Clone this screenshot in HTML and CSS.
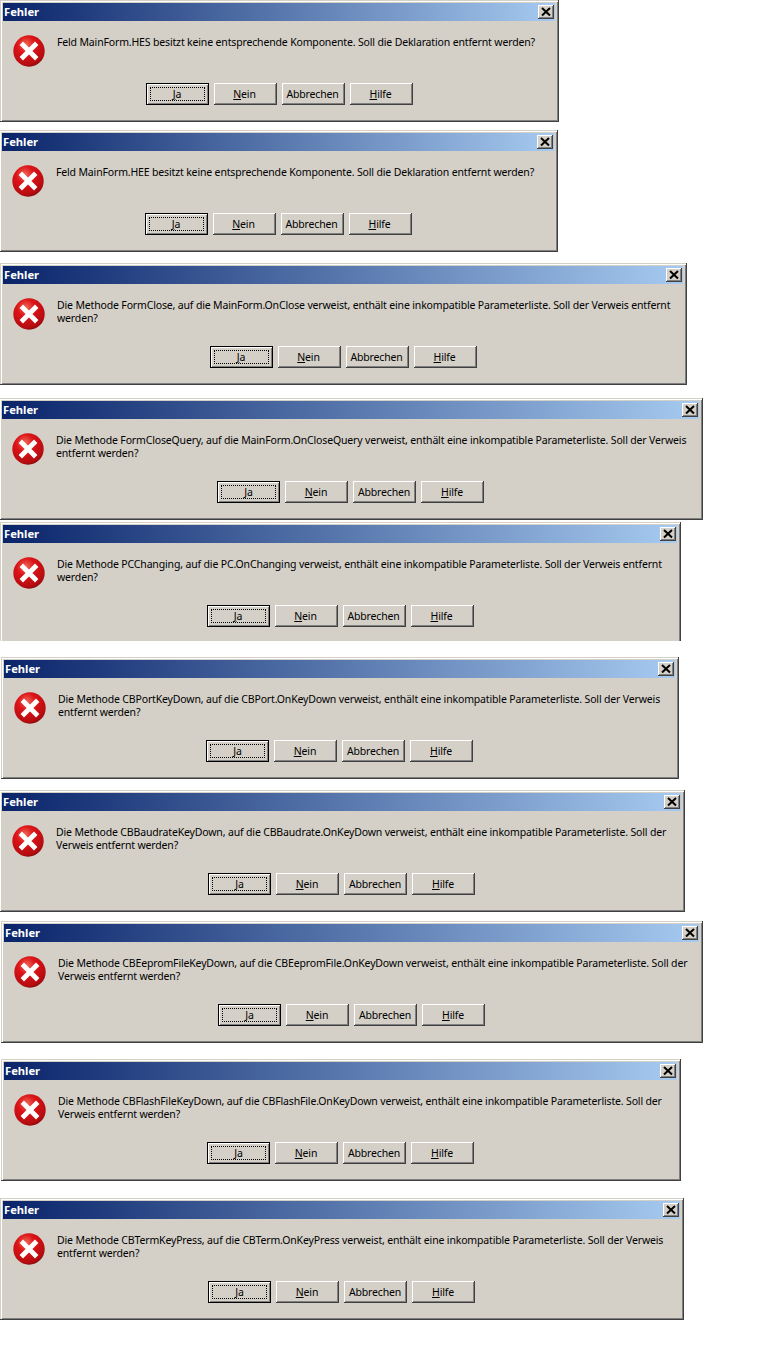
FILE: index.html
```html
<!DOCTYPE html>
<html lang="de">
<head>
<meta charset="utf-8">
<title>Fehler</title>
<link rel="stylesheet" href="styles.css">
</head>
<body>
<svg class="defs" width="0" height="0" aria-hidden="true">
<defs>
<radialGradient id="red" cx="0.4" cy="0.3" r="0.8">
<stop offset="0" stop-color="#f06a5a"/>
<stop offset="0.35" stop-color="#dc1418"/>
<stop offset="0.8" stop-color="#b40c10"/>
<stop offset="1" stop-color="#5e0404"/>
</radialGradient>
<symbol id="err" viewBox="0 0 32 32">
<circle cx="16" cy="16" r="15.7" fill="url(#red)"/>
<path d="M10 10 L22 22 M22 10 L10 22" stroke="#fff" stroke-width="4.8" stroke-linecap="square" fill="none"/>
</symbol>
<symbol id="x" viewBox="0 0 16 14">
<path d="M4 3 L12 10.5 M12 3 L4 10.5" stroke="#000" stroke-width="2" fill="none"/>
</symbol>
</defs>
</svg>

<section class="dialog d1">
<div class="titlebar"><span class="title">Fehler</span><span class="close"><svg class="x"><use href="#x"/></svg></span></div>
<div class="message"><svg class="icon"><use href="#err"/></svg><p class="text">Feld MainForm.HES besitzt keine entsprechende Komponente. Soll die Deklaration entfernt werden?</p></div>
<div class="buttons"><button class="btn default"><span class="focus"><u>J</u>a</span></button><button class="btn"><u>N</u>ein</button><button class="btn">Abbrechen</button><button class="btn"><u>H</u>ilfe</button></div>
</section>

<section class="dialog d2">
<div class="titlebar"><span class="title">Fehler</span><span class="close"><svg class="x"><use href="#x"/></svg></span></div>
<div class="message"><svg class="icon"><use href="#err"/></svg><p class="text">Feld MainForm.HEE besitzt keine entsprechende Komponente. Soll die Deklaration entfernt werden?</p></div>
<div class="buttons"><button class="btn default"><span class="focus"><u>J</u>a</span></button><button class="btn"><u>N</u>ein</button><button class="btn">Abbrechen</button><button class="btn"><u>H</u>ilfe</button></div>
</section>

<section class="dialog d3">
<div class="titlebar"><span class="title">Fehler</span><span class="close"><svg class="x"><use href="#x"/></svg></span></div>
<div class="message"><svg class="icon"><use href="#err"/></svg><p class="text">Die Methode FormClose, auf die MainForm.OnClose verweist, enthält eine inkompatible Parameterliste. Soll der Verweis entfernt<br>werden?</p></div>
<div class="buttons"><button class="btn default"><span class="focus"><u>J</u>a</span></button><button class="btn"><u>N</u>ein</button><button class="btn">Abbrechen</button><button class="btn"><u>H</u>ilfe</button></div>
</section>

<section class="dialog d4">
<div class="titlebar"><span class="title">Fehler</span><span class="close"><svg class="x"><use href="#x"/></svg></span></div>
<div class="message"><svg class="icon"><use href="#err"/></svg><p class="text">Die Methode FormCloseQuery, auf die MainForm.OnCloseQuery verweist, enthält eine inkompatible Parameterliste. Soll der Verweis<br>entfernt werden?</p></div>
<div class="buttons"><button class="btn default"><span class="focus"><u>J</u>a</span></button><button class="btn"><u>N</u>ein</button><button class="btn">Abbrechen</button><button class="btn"><u>H</u>ilfe</button></div>
</section>

<section class="dialog d5">
<div class="titlebar"><span class="title">Fehler</span><span class="close"><svg class="x"><use href="#x"/></svg></span></div>
<div class="message"><svg class="icon"><use href="#err"/></svg><p class="text">Die Methode PCChanging, auf die PC.OnChanging verweist, enthält eine inkompatible Parameterliste. Soll der Verweis entfernt<br>werden?</p></div>
<div class="buttons"><button class="btn default"><span class="focus"><u>J</u>a</span></button><button class="btn"><u>N</u>ein</button><button class="btn">Abbrechen</button><button class="btn"><u>H</u>ilfe</button></div>
</section>

<section class="dialog d6">
<div class="titlebar"><span class="title">Fehler</span><span class="close"><svg class="x"><use href="#x"/></svg></span></div>
<div class="message"><svg class="icon"><use href="#err"/></svg><p class="text">Die Methode CBPortKeyDown, auf die CBPort.OnKeyDown verweist, enthält eine inkompatible Parameterliste. Soll der Verweis<br>entfernt werden?</p></div>
<div class="buttons"><button class="btn default"><span class="focus"><u>J</u>a</span></button><button class="btn"><u>N</u>ein</button><button class="btn">Abbrechen</button><button class="btn"><u>H</u>ilfe</button></div>
</section>

<section class="dialog d7">
<div class="titlebar"><span class="title">Fehler</span><span class="close"><svg class="x"><use href="#x"/></svg></span></div>
<div class="message"><svg class="icon"><use href="#err"/></svg><p class="text">Die Methode CBBaudrateKeyDown, auf die CBBaudrate.OnKeyDown verweist, enthält eine inkompatible Parameterliste. Soll der<br>Verweis entfernt werden?</p></div>
<div class="buttons"><button class="btn default"><span class="focus"><u>J</u>a</span></button><button class="btn"><u>N</u>ein</button><button class="btn">Abbrechen</button><button class="btn"><u>H</u>ilfe</button></div>
</section>

<section class="dialog d8">
<div class="titlebar"><span class="title">Fehler</span><span class="close"><svg class="x"><use href="#x"/></svg></span></div>
<div class="message"><svg class="icon"><use href="#err"/></svg><p class="text">Die Methode CBEepromFileKeyDown, auf die CBEepromFile.OnKeyDown verweist, enthält eine inkompatible Parameterliste. Soll der<br>Verweis entfernt werden?</p></div>
<div class="buttons"><button class="btn default"><span class="focus"><u>J</u>a</span></button><button class="btn"><u>N</u>ein</button><button class="btn">Abbrechen</button><button class="btn"><u>H</u>ilfe</button></div>
</section>

<section class="dialog d9">
<div class="titlebar"><span class="title">Fehler</span><span class="close"><svg class="x"><use href="#x"/></svg></span></div>
<div class="message"><svg class="icon"><use href="#err"/></svg><p class="text">Die Methode CBFlashFileKeyDown, auf die CBFlashFile.OnKeyDown verweist, enthält eine inkompatible Parameterliste. Soll der<br>Verweis entfernt werden?</p></div>
<div class="buttons"><button class="btn default"><span class="focus"><u>J</u>a</span></button><button class="btn"><u>N</u>ein</button><button class="btn">Abbrechen</button><button class="btn"><u>H</u>ilfe</button></div>
</section>

<section class="dialog d10">
<div class="titlebar"><span class="title">Fehler</span><span class="close"><svg class="x"><use href="#x"/></svg></span></div>
<div class="message"><svg class="icon"><use href="#err"/></svg><p class="text">Die Methode CBTermKeyPress, auf die CBTerm.OnKeyPress verweist, enthält eine inkompatible Parameterliste. Soll der Verweis<br>entfernt werden?</p></div>
<div class="buttons"><button class="btn default"><span class="focus"><u>J</u>a</span></button><button class="btn"><u>N</u>ein</button><button class="btn">Abbrechen</button><button class="btn"><u>H</u>ilfe</button></div>
</section>
</body>
</html>
```
FILE: styles.css
```css
html, body { margin: 0; padding: 0; background: #fff; }
body { width: 767px; height: 1364px; overflow: hidden; font-family: "Noto Sans", "Liberation Sans", sans-serif; font-size: 10.5px; letter-spacing: -0.155px; color: #000; }
.defs { position: absolute; }

.dialog {
  box-sizing: border-box;
  height: 122px;
  padding: 3px;
  background: #d4d0c8;
  border-right: 1px solid #404040;
  border-bottom: 1px solid #404040;
  box-shadow: inset 1px 1px 0 #d4d0c8, inset 2px 2px 0 #fff, inset -1px -1px 0 #808080;
  display: flex;
  flex-direction: column;
}
.d1 { width: 559px; margin: 0 0 0 0; }
.d2 { width: 559px; margin: 8px 0 0 -1px; }
.d3 { width: 687px; margin: 11px 0 0 0; }
.d4 { width: 704px; margin: 13px 0 0 -1px; }
.d5 { width: 681px; margin: 2px 0 0 0; height: 119px; border-bottom: 0; box-shadow: inset 1px 1px 0 #d4d0c8, inset 2px 2px 0 #fff, inset -1px 0 0 #808080; }
.d6 { width: 678px; margin: 16px 0 0 1px; }
.d7 { width: 686px; margin: 11px 0 0 -1px; }
.d8 { width: 702px; margin: 9px 0 0 1px; }
.d9 { width: 680px; margin: 16px 0 0 1px; }
.d10 { width: 684px; margin: 17px 0 0 0; }

.titlebar {
  height: 18px;
  flex: none;
  display: flex;
  align-items: center;
  justify-content: space-between;
  padding: 0 1px 0 1px;
  background: linear-gradient(to right, #0a246a, #a6caf0);
}
.title { font-weight: 700; font-size: 11.2px; line-height: 14px; letter-spacing: 0; color: #fff; }
.close {
  box-sizing: border-box;
  width: 16px;
  height: 14px;
  display: flex;
  background: #d4d0c8;
  border-right: 1px solid #404040;
  border-bottom: 1px solid #404040;
  box-shadow: inset 1px 1px 0 #fff, inset -1px -1px 0 #808080;
}
.x { width: 16px; height: 14px; flex: none; }

.message {
  flex: none;
  height: 62px;
  display: flex;
  align-items: flex-start;
  padding: 11px 0 0 10px;
  box-sizing: border-box;
}
.icon { width: 32px; height: 32px; flex: none; margin: 3px 12px 0 0; }
.text { margin: 0; line-height: 13px; white-space: nowrap; padding-top: 4px; }

.buttons { display: flex; justify-content: center; gap: 5px; }
.btn {
  box-sizing: border-box;
  width: 63px;
  height: 22px;
  padding: 0;
  background: #d4d0c8;
  font: inherit;
  letter-spacing: inherit;
  color: #000;
  border: 0;
  border-right: 1px solid #404040;
  border-bottom: 1px solid #404040;
  box-shadow: inset 1px 1px 0 #fff, inset -1px -1px 0 #808080;
}
.default {
  border: 1px solid #000;
  box-shadow: inset 1px 1px 0 #fff, inset -1px -1px 0 #808080, inset -2px -2px 0 #d4d0c8;
  padding: 3px;
}
.focus { display: block; height: 100%; line-height: 12px; border: 1px dotted #000; box-sizing: border-box; }
```
